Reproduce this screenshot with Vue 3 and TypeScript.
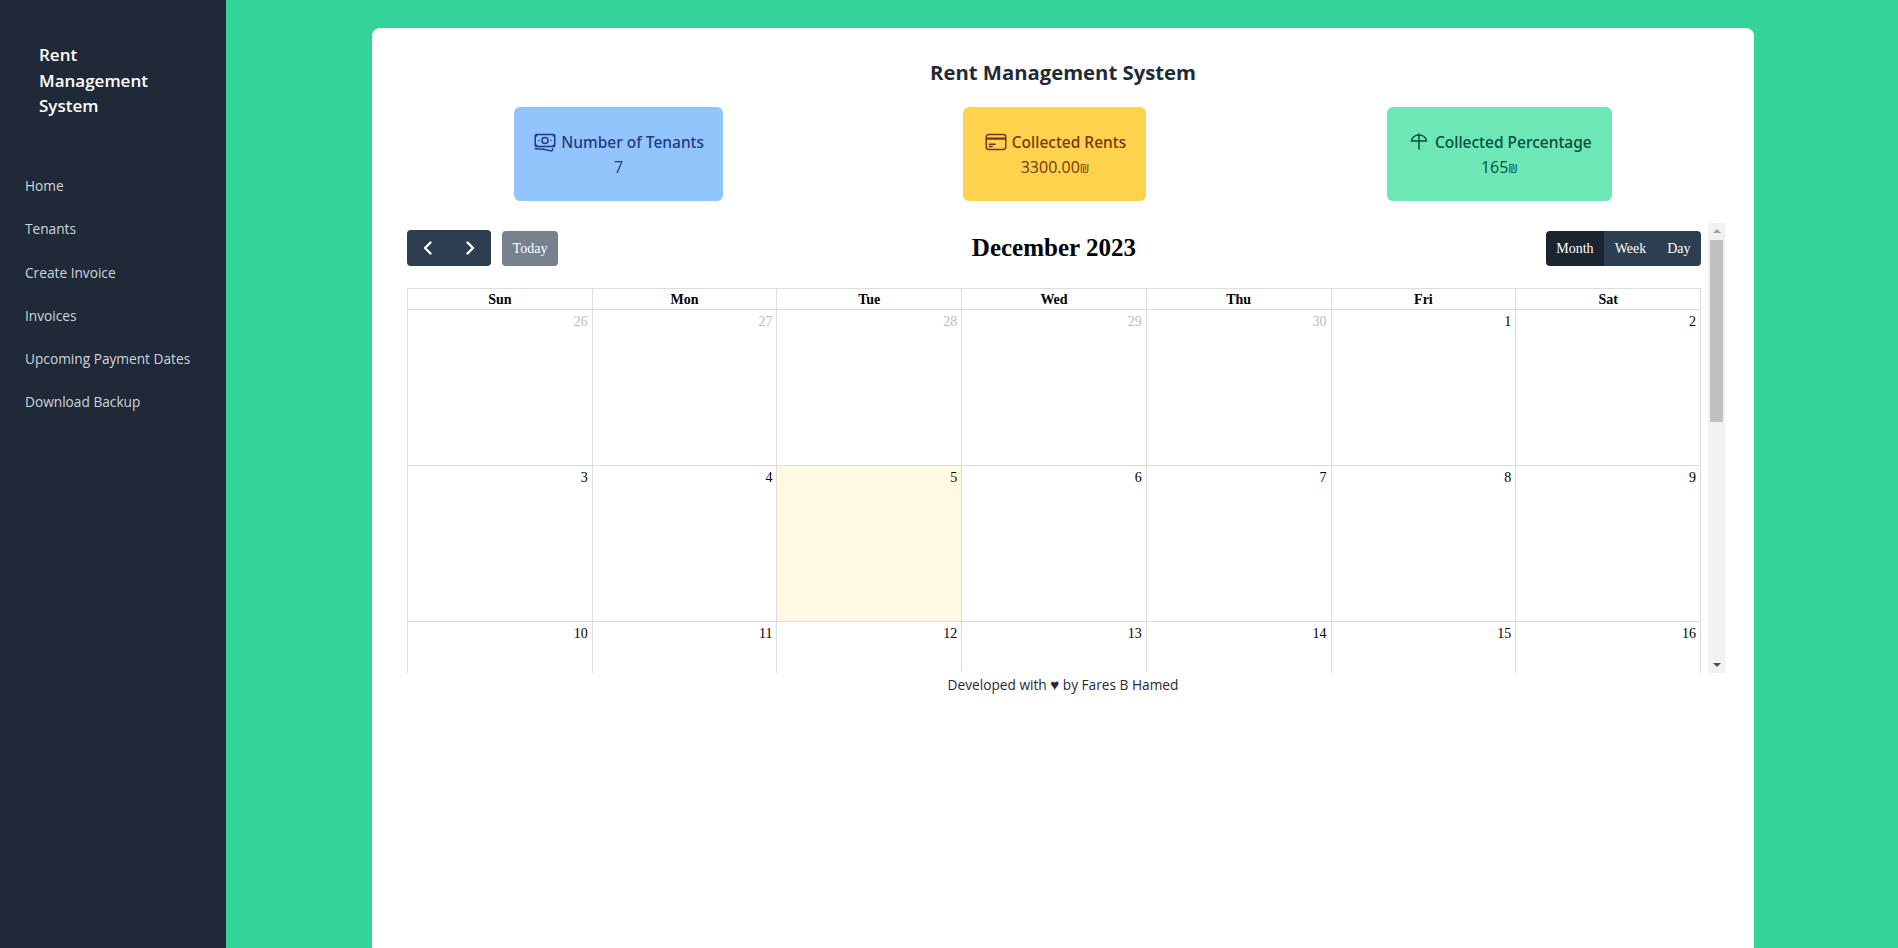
<template>
  <div class="layout">
    <aside class="sidebar">
      <div class="brand">Rent<br />Management<br />System</div>
      <nav class="nav">
        <a v-for="link in links" :key="link" class="nav-link">{{ link }}</a>
      </nav>
    </aside>

    <main class="main">
      <section class="panel">
        <h1 class="title">Rent Management System</h1>

        <div class="stats">
          <div class="stat stat-blue">
            <div class="stat-label">
              <svg class="stat-icon" viewBox="0 0 24 24" fill="none" stroke="currentColor" stroke-width="1.5" stroke-linecap="round" stroke-linejoin="round">
                <path d="M2.25 18.75a60.07 60.07 0 0 1 15.797 2.101c.727.198 1.453-.342 1.453-1.096V18.75M3.75 4.5v.75A.75.75 0 0 1 3 6h-.75m0 0v-.375c0-.621.504-1.125 1.125-1.125H20.25M2.25 6v9m18-10.5v.75c0 .414.336.75.75.75h.75m-1.5-1.5h.375c.621 0 1.125.504 1.125 1.125v9.75c0 .621-.504 1.125-1.125 1.125h-.375m1.5-1.5H21a.75.75 0 0 0-.75.75v.75m0 0H3.75m0 0h-.375a1.125 1.125 0 0 1-1.125-1.125V15m1.5 1.5v-.75A.75.75 0 0 0 3 15h-.75M15 10.5a3 3 0 1 1-6 0 3 3 0 0 1 6 0Zm3 0h.008v.008H18V10.5Zm-12 0h.008v.008H6V10.5Z" />
              </svg>
              <span>Number of Tenants</span>
            </div>
            <div class="stat-value">7</div>
          </div>

          <div class="stat stat-yellow">
            <div class="stat-label">
              <svg class="stat-icon" viewBox="0 0 24 24" fill="none" stroke="currentColor" stroke-width="1.5" stroke-linecap="round" stroke-linejoin="round">
                <path d="M2.25 8.25h19.5M2.25 9h19.5m-16.5 5.25h6m-6 2.25h3m-3.75 3h15a2.25 2.25 0 0 0 2.25-2.25V6.75A2.25 2.25 0 0 0 19.5 4.5h-15a2.25 2.25 0 0 0-2.25 2.25v10.5A2.25 2.25 0 0 0 4.5 19.5Z" />
              </svg>
              <span>Collected Rents</span>
            </div>
            <div class="stat-value">3300.00<span class="currency">₪</span></div>
          </div>

          <div class="stat stat-green">
            <div class="stat-label">
              <svg class="stat-icon" viewBox="0 0 24 24" fill="none" stroke="currentColor" stroke-width="1.5" stroke-linecap="round" stroke-linejoin="round">
                <path d="M12 4v15M4.500 11c.6-3.500 3.800-6 7.500-6s6.900 2.500 7.500 6Z" />
              </svg>
              <span>Collected Percentage</span>
            </div>
            <div class="stat-value">165<span class="currency">₪</span></div>
          </div>
        </div>

        <div class="calendar-row">
          <div class="calendar-scroll">
            <div class="toolbar">
              <div class="toolbar-left">
                <div class="btn-group">
                  <button class="cal-btn arrow-btn">
                    <svg viewBox="0 0 16 16" fill="none" stroke="currentColor" stroke-width="2.400" stroke-linecap="round" stroke-linejoin="round"><path d="M10.500 2.500 5 8l5.500 5.500" /></svg>
                  </button>
                  <button class="cal-btn arrow-btn">
                    <svg viewBox="0 0 16 16" fill="none" stroke="currentColor" stroke-width="2.400" stroke-linecap="round" stroke-linejoin="round"><path d="M5.500 2.500 11 8l-5.500 5.500" /></svg>
                  </button>
                </div>
                <button class="today-btn">Today</button>
              </div>
              <h2 class="month-title">December 2023</h2>
              <div class="btn-group">
                <button v-for="view in views" :key="view" class="cal-btn view-btn" :class="{ active: view === 'Month' }">{{ view }}</button>
              </div>
            </div>

            <div class="grid">
              <div v-for="day in weekdays" :key="day" class="head-cell">{{ day }}</div>
              <div
                v-for="cell in cells"
                :key="cell.key"
                class="day-cell"
                :class="{ muted: cell.muted, today: cell.today }"
              >
                {{ cell.label }}
              </div>
            </div>
          </div>

          <!-- headless chrome hides native scrollbars, so this one is drawn -->
          <div class="scrollbar">
            <span class="scroll-up"></span>
            <span class="scroll-thumb"></span>
            <span class="scroll-down"></span>
          </div>
        </div>

        <footer class="credit">Developed with <span class="heart">♥</span> by Fares B Hamed</footer>
      </section>
    </main>
  </div>
</template>

<script setup lang="ts">
interface DayCell {
  key: string;
  label: number;
  muted: boolean;
  today: boolean;
}

const links = ['Home', 'Tenants', 'Create Invoice', 'Invoices', 'Upcoming Payment Dates', 'Download Backup'];
const views = ['Month', 'Week', 'Day'];
const weekdays = ['Sun', 'Mon', 'Tue', 'Wed', 'Thu', 'Fri', 'Sat'];

const cells: DayCell[] = [];
for (const d of [26, 27, 28, 29, 30]) {
  cells.push({ key: 'nov-' + d, label: d, muted: true, today: false });
}
for (let d = 1; d <= 31; d++) {
  cells.push({ key: 'dec-' + d, label: d, muted: false, today: d === 5 });
}
for (const d of [1, 2, 3, 4, 5, 6]) {
  cells.push({ key: 'jan-' + d, label: d, muted: true, today: false });
}
</script>

<style>
html, body {
  margin: 0;
  overflow: hidden;
}
</style>

<style scoped>
.layout {
  display: flex;
  height: 948px;
  overflow: hidden;
  font-family: "Open Sans", "Noto Sans", sans-serif;
  background: #34d399;
}
.sidebar {
  width: 226px;
  flex: none;
  background: #1f2937;
}
.brand {
  padding: 42px 39px 0;
  font-size: 17px;
  line-height: 25.500px;
  font-weight: 600;
  color: #fff;
}
.nav {
  display: flex;
  flex-direction: column;
  margin-top: 45.500px;
  padding-left: 25px;
}
.nav-link {
  height: 43.300px;
  line-height: 43.300px;
  font-size: 13.700px;
  color: #d1d5db;
  white-space: nowrap;
}
.main {
  flex: 1;
  min-width: 0;
  padding: 28px 144px 0 146px;
}
.panel {
  height: 1000px;
  background: #fff;
  border-radius: 8px;
  padding: 30px 22px 0;
  box-sizing: border-box;
}
.title {
  margin: 0;
  text-align: center;
  font-size: 20.300px;
  line-height: 28px;
  font-weight: 700;
  color: #1f2937;
}
.stats {
  display: flex;
  justify-content: space-around;
  margin-top: 21px;
}
.stat {
  padding-top: 23px;
  height: 94px;
  box-sizing: border-box;
  border-radius: 6px;
  text-align: center;
  white-space: nowrap;
}
.stat-blue { width: 209px; background: #93c5fd; color: #1e3a8a; }
.stat-yellow { width: 183px; background: #fcd34d; color: #78350f; }
.stat-green { width: 225px; background: #6ee7b7; color: #064e3b; }
.stat-label {
  display: flex;
  align-items: center;
  justify-content: center;
  gap: 4px;
  height: 24px;
  font-family: "Noto Sans", "Open Sans", sans-serif;
  font-size: 15.500px;
  line-height: 24px;
  font-weight: 500;
}
.stat-icon {
  width: 24px;
  height: 24px;
  flex: none;
}
.stat-value {
  font-size: 16px;
  line-height: 26px;
  font-weight: 400;
}
.currency {
  font-size: 12px;
}
.calendar-row {
  display: flex;
  gap: 7px;
  height: 450px;
  margin-top: 22px;
  padding: 0 7px 0 13px;
}
.calendar-scroll {
  flex: 1;
  min-width: 0;
  overflow: hidden;
  font-family: "Liberation Serif", "Times New Roman", serif;
}
.scrollbar {
  width: 17px;
  flex: none;
  display: flex;
  flex-direction: column;
  align-items: center;
  background: #f1f1f1;
}
.scroll-up {
  width: 0;
  height: 0;
  margin-top: 6px;
  border-left: 4px solid transparent;
  border-right: 4px solid transparent;
  border-bottom: 4px solid #a3a3a3;
}
.scroll-thumb {
  width: 13px;
  height: 182px;
  margin-top: 7px;
  background: #c1c1c1;
}
.scroll-down {
  width: 0;
  height: 0;
  margin-top: auto;
  margin-bottom: 6px;
  border-left: 4px solid transparent;
  border-right: 4px solid transparent;
  border-top: 4px solid #505050;
}
.toolbar {
  display: flex;
  align-items: center;
  justify-content: space-between;
  height: 36px;
  margin-top: 7px;
}
.toolbar-left {
  display: flex;
  align-items: center;
  gap: 11px;
  width: 155px;
}
.btn-group {
  display: flex;
  border-radius: 4px;
  overflow: hidden;
  height: 35px;
  margin-top: 1px;
}
.toolbar-left .btn-group {
  height: 36px;
  margin-top: 0;
}
.cal-btn {
  border: none;
  margin: 0;
  height: 100%;
  background: #2c3e50;
  color: #fff;
  font-family: inherit;
  font-size: 14px;
  padding: 0;
}
.arrow-btn {
  width: 42px;
  display: flex;
  align-items: center;
  justify-content: center;
}
.arrow-btn svg {
  width: 16px;
  height: 16px;
}
.view-btn {
  padding: 0 10.500px;
}
.view-btn.active {
  background: #1a252f;
}
.today-btn {
  width: 56px;
  height: 35px;
  margin-top: 1px;
  border: none;
  border-radius: 4px;
  padding: 0;
  background: #76818d;
  color: #fff;
  font-family: inherit;
  font-size: 14px;
}
.month-title {
  margin: 0;
  font-size: 25px;
  font-weight: 700;
  color: #000;
}
.grid {
  display: grid;
  grid-template-columns: repeat(7, 1fr);
  margin-top: 22px;
  border-top: 1px solid #ddd;
  border-left: 1px solid #ddd;
}
.head-cell {
  height: 20px;
  line-height: 21px;
  text-align: center;
  font-size: 14px;
  font-weight: 700;
  color: #000;
  border-right: 1px solid #ddd;
  border-bottom: 1px solid #ddd;
}
.day-cell {
  height: 151px;
  padding: 4px 4px 0 0;
  text-align: right;
  font-size: 14px;
  line-height: 16px;
  color: #000;
  border-right: 1px solid #ddd;
  border-bottom: 1px solid #ddd;
}
.day-cell.muted {
  color: #bbb;
}
.day-cell.today {
  background: #fff9df;
}
.credit {
  text-align: center;
  font-size: 13.700px;
  line-height: 22px;
  color: #1f2937;
}
.heart {
  font-size: 15px;
}
</style>
